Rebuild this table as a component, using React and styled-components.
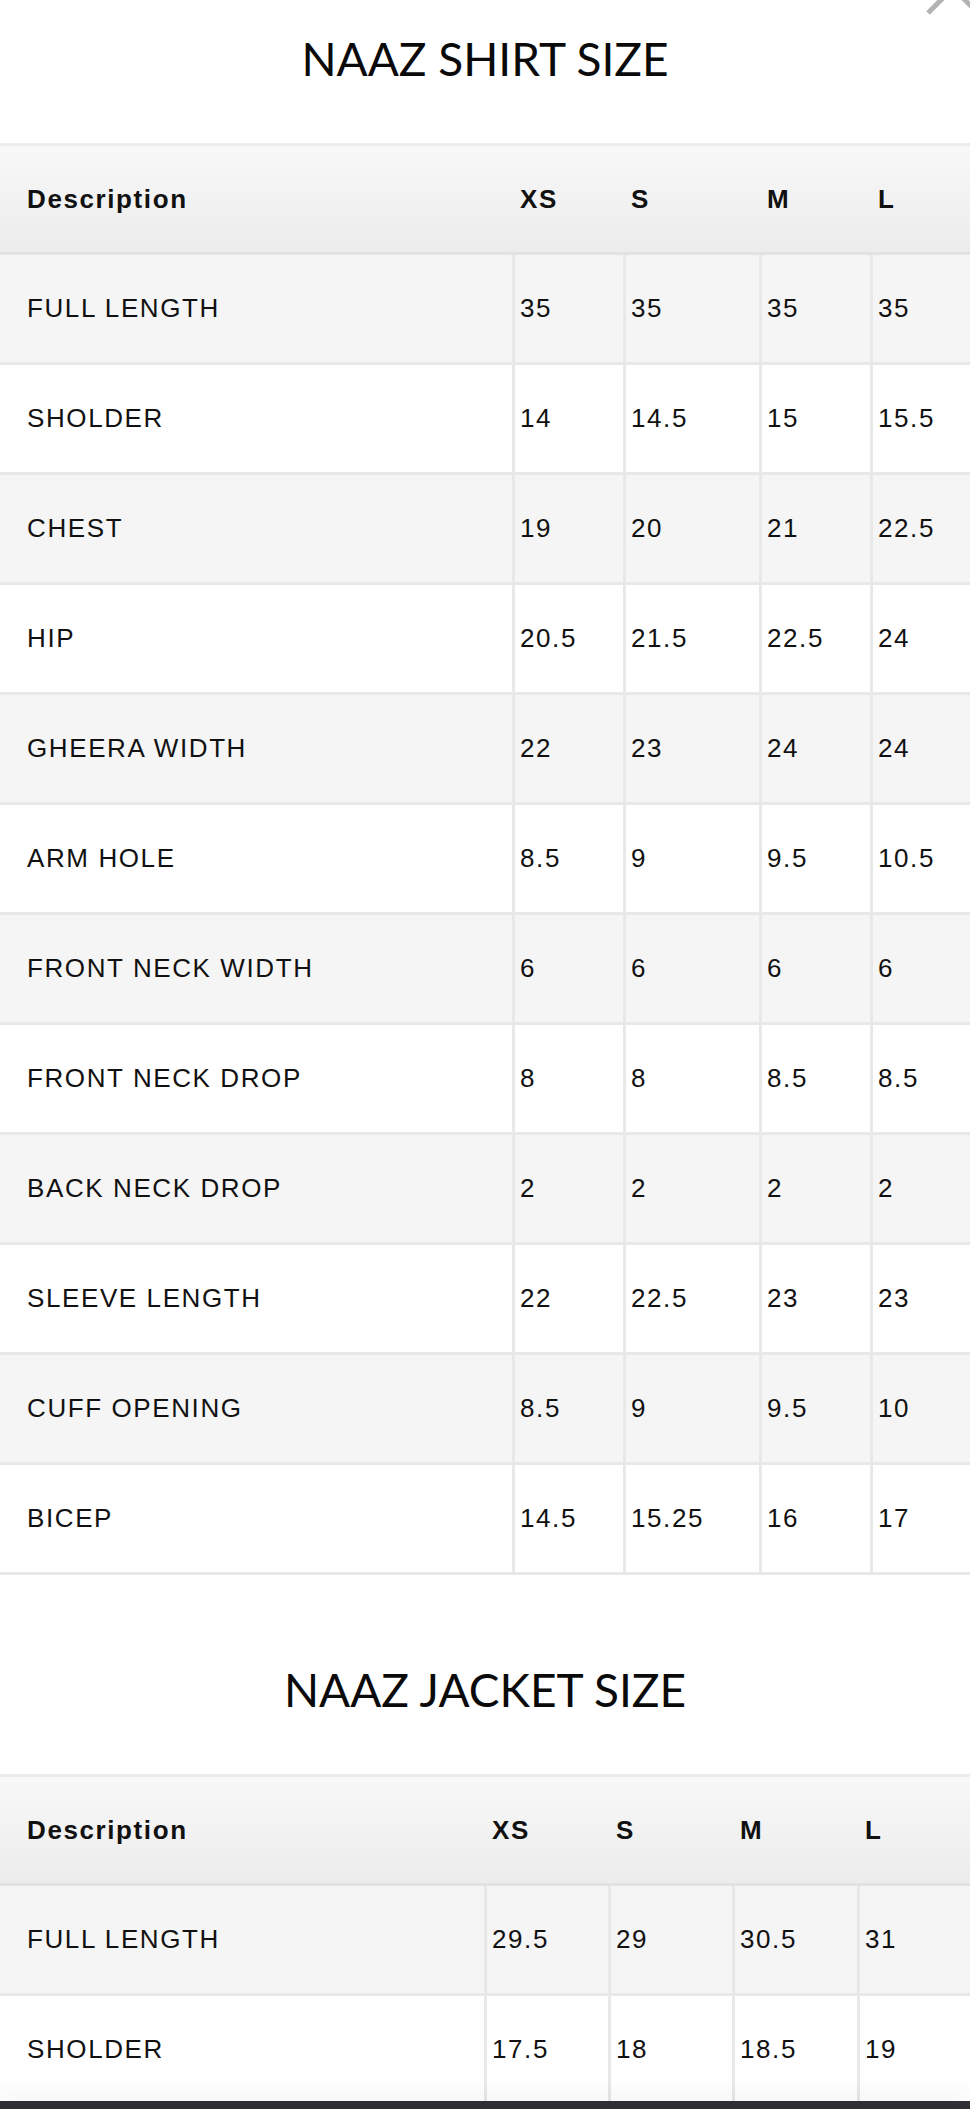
import React from "react";
import styled, { createGlobalStyle } from "styled-components";

const SIZES = ["XS", "S", "M", "L"];

const SHIRT_ROWS = [
  ["FULL LENGTH", "35", "35", "35", "35"],
  ["SHOLDER", "14", "14.5", "15", "15.5"],
  ["CHEST", "19", "20", "21", "22.5"],
  ["HIP", "20.5", "21.5", "22.5", "24"],
  ["GHEERA WIDTH", "22", "23", "24", "24"],
  ["ARM HOLE", "8.5", "9", "9.5", "10.5"],
  ["FRONT NECK WIDTH", "6", "6", "6", "6"],
  ["FRONT NECK DROP", "8", "8", "8.5", "8.5"],
  ["BACK NECK DROP", "2", "2", "2", "2"],
  ["SLEEVE LENGTH", "22", "22.5", "23", "23"],
  ["CUFF OPENING", "8.5", "9", "9.5", "10"],
  ["BICEP", "14.5", "15.25", "16", "17"],
];

const JACKET_ROWS = [
  ["FULL LENGTH", "29.5", "29", "30.5", "31"],
  ["SHOLDER", "17.5", "18", "18.5", "19"],
];

const lineColor = "#e8e8e8";

const GlobalStyle = createGlobalStyle`
  html, body {
    margin: 0;
    padding: 0;
    background: #fff;
  }
  body {
    font-family: "Liberation Sans", Arial, sans-serif;
    color: #111;
    overflow: hidden;
  }
`;

const Page = styled.div`
  position: relative;
  width: 970px;
  overflow: hidden;
`;

const CloseIcon = styled.svg`
  position: absolute;
  top: -42px;
  right: -13px;
  width: 60px;
  height: 60px;
`;

const Section = styled.section`
  display: flex;
  flex-direction: column;
  margin-top: ${(props) => props.offset || 0}px;
`;

const Title = styled.h2`
  margin: 0;
  height: 118px;
  padding-bottom: 25px;
  line-height: 118px;
  text-align: center;
  font-family: "Lato", "Liberation Sans", sans-serif;
  font-weight: 400;
  font-size: 46px;
  letter-spacing: 0;
  color: #0a0a0a;
`;

const Grid = styled.div`
  display: flex;
  flex-direction: column;
`;

const HeadRow = styled.div`
  display: grid;
  grid-template-columns: ${(props) => props.cols};
  height: 112px;
  box-sizing: border-box;
  border-top: 3px solid #ececec;
  border-bottom: 3px solid #e2e2e2;
  background: linear-gradient(to bottom, #f8f8f8, #ececec);
`;

const Row = styled.div`
  display: grid;
  grid-template-columns: ${(props) => props.cols};
  height: 110px;
  background: ${(props) => (props.shaded ? "#f5f5f5" : "#fff")};
`;

const Cell = styled.div`
  display: flex;
  align-items: center;
  box-sizing: border-box;
  border-bottom: 3px solid ${lineColor};
  border-left: ${(props) => (props.first ? "none" : `3px solid ${lineColor}`)};
  padding-left: ${(props) => (props.first ? "27px" : "5px")};
  font-size: 26px;
  letter-spacing: 1.6px;
  white-space: nowrap;
`;

const HeadCell = styled.div`
  display: flex;
  align-items: center;
  padding-left: ${(props) => (props.first ? "27px" : "8px")};
  font-size: 26px;
  font-weight: 700;
  letter-spacing: 1.6px;
`;

const BottomBar = styled.div`
  position: fixed;
  left: 0;
  right: 0;
  bottom: 0;
  height: 8px;
  background: #2e3034;
  box-shadow: 0 -8px 18px rgba(0, 0, 0, 0.07);
`;

const SizeTable = ({ title, cols, rows, offset }) => (
  <Section offset={offset}>
    <Title>{title}</Title>
    <Grid>
      <HeadRow cols={cols}>
        <HeadCell first>Description</HeadCell>
        {SIZES.map((size) => (
          <HeadCell key={size}>{size}</HeadCell>
        ))}
      </HeadRow>
      {rows.map(([label, ...values], index) => (
        <Row key={label} cols={cols} shaded={index % 2 === 0}>
          <Cell first>{label}</Cell>
          {values.map((value, i) => (
            <Cell key={i}>{value}</Cell>
          ))}
        </Row>
      ))}
    </Grid>
  </Section>
);

const App = () => (
  <Page>
    <GlobalStyle />
    <CloseIcon viewBox="0 0 60 60">
      <path
        d="M5 5 L55 55 M55 5 L5 55"
        stroke="#b3b3b3"
        strokeWidth="5"
        fill="none"
      />
    </CloseIcon>
    <SizeTable
      title="NAAZ SHIRT SIZE"
      cols="512px 111px 136px 111px 1fr"
      rows={SHIRT_ROWS}
    />
    <SizeTable
      title="NAAZ JACKET SIZE"
      cols="484px 124px 124px 125px 1fr"
      rows={JACKET_ROWS}
      offset={56}
    />
    <BottomBar />
  </Page>
);

export default App;
